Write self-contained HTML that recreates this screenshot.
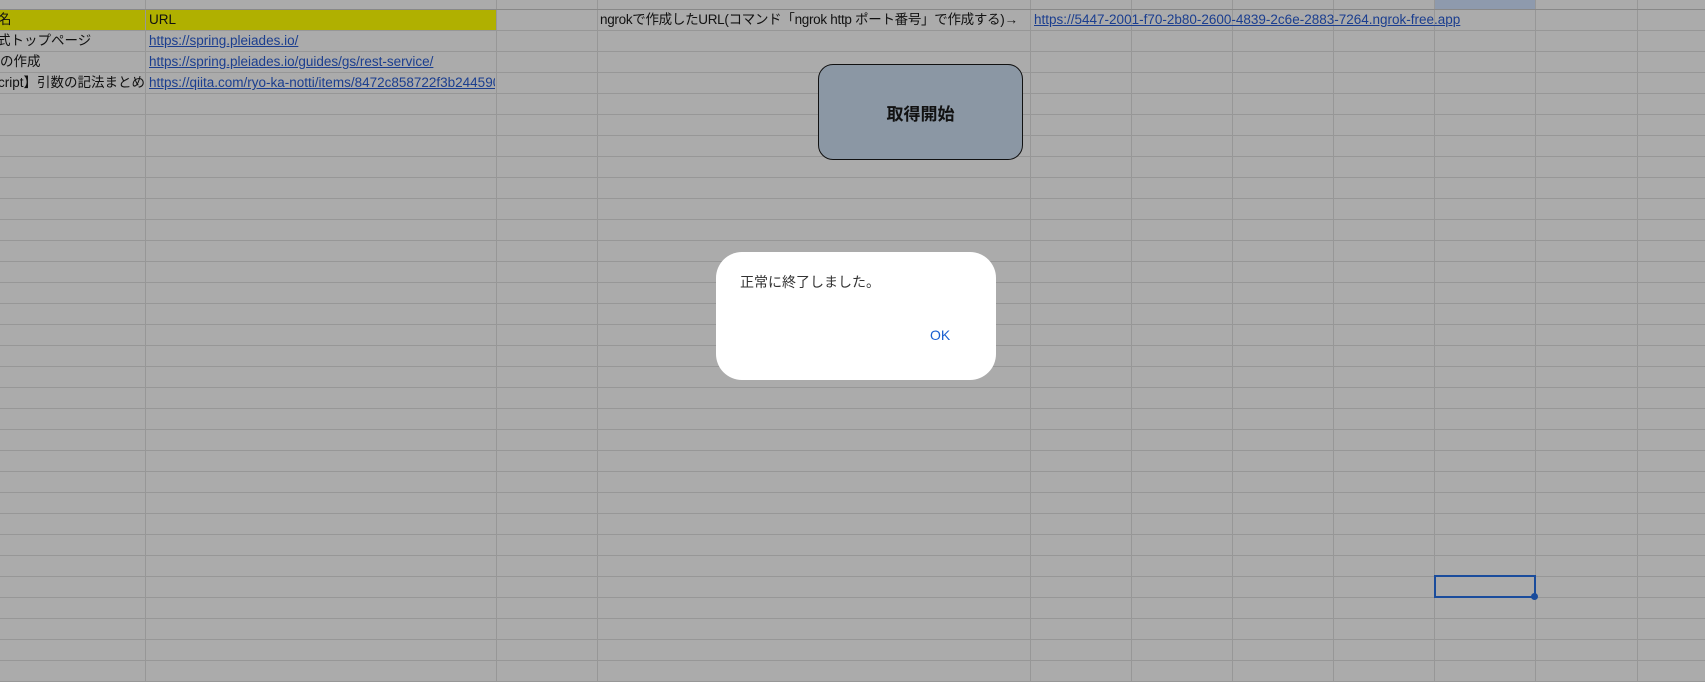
<!DOCTYPE html>
<html><head><meta charset="utf-8"><style>
body{margin:0;width:1705px;height:681px;overflow:hidden;background:#ababab;position:relative;font-family:"Liberation Sans","Noto Sans CJK JP",sans-serif;}
.v{position:absolute;top:0;width:1px;height:681px;background:#979797}
.h{position:absolute;left:0;width:1705px;height:1px;background:#979797}
.t{position:absolute;font-size:13.5px;color:#111;white-space:nowrap;line-height:21px}
a{color:#1b3e8f;text-decoration:underline}
</style></head><body>
<div style="position:absolute;left:1434px;top:0;width:101px;height:9px;background:#8e9aad"></div>
<div style="position:absolute;left:0;top:9px;width:496px;height:21px;background:#b0b000"></div>
<div id="lines"></div>
<script>
var L=document.getElementById('lines'),s='';
[145,496,597,1030,1131,1232,1333,1434,1535,1637].forEach(function(x){s+='<div class="v" style="left:'+x+'px"></div>';});
for(var k=0;k<33;k++){s+='<div class="h" style="top:'+(9+21*k)+'px;'+(k==0?'background:#888;':'')+'"></div>';}
L.innerHTML=s;
</script>
<div class="t" style="left:-2px;top:9px">名</div>
<div class="t" style="left:149px;top:9px">URL</div>
<div class="t" style="left:-3px;top:30px">式トップページ</div>
<div class="t" style="left:149px;top:30px"><a>https://spring.pleiades.io/</a></div>
<div class="t" style="left:0;top:51px">の作成</div>
<div class="t" style="left:149px;top:51px"><a>https://spring.pleiades.io/guides/gs/rest-service/</a></div>
<div class="t" style="left:-2px;top:72px">cript】引数の記法まとめ</div>
<div class="t" style="left:149px;top:72px;width:346px;overflow:hidden"><a>https://qiita.com/ryo-ka-notti/items/8472c858722f3b244590</a></div>
<div class="t" style="left:600px;top:9px;letter-spacing:-0.3px">ngrokで作成したURL(コマンド「ngrok http ポート番号」で作成する)→</div>
<div class="t" style="left:1034px;top:9px"><a>https://5447-2001-f70-2b80-2600-4839-2c6e-2883-7264.ngrok-free.app</a></div>
<div style="position:absolute;left:818px;top:64px;width:203px;height:94px;background:#8b97a4;border:1px solid #111;border-radius:15px;display:flex;align-items:center;justify-content:center;font-size:17px;font-weight:bold;color:#111">取得開始</div>
<div style="position:absolute;left:716px;top:252px;width:280px;height:128px;background:#fff;border-radius:26px"></div>
<div style="position:absolute;left:740px;top:272px;font-size:14px;color:#333">正常に終了しました。</div>
<div style="position:absolute;left:930px;top:327px;font-size:14px;color:#1a5fd0">OK</div>
<div style="position:absolute;left:1434px;top:575px;width:98px;height:19px;border:2px solid #1a4c9c"></div>
<div style="position:absolute;left:1531px;top:593px;width:7px;height:7px;border-radius:50%;background:#1a4c9c"></div>
</body></html>
